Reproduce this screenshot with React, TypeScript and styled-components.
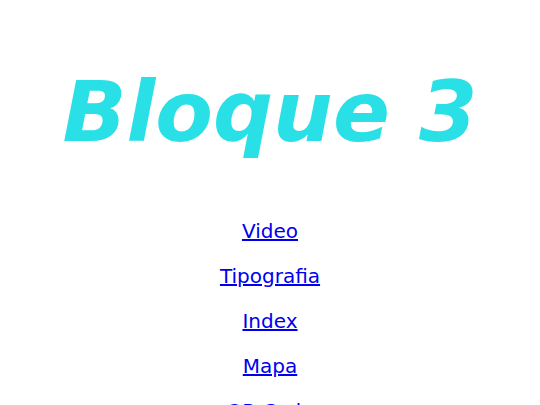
import React from 'react';
import styled, { createGlobalStyle } from 'styled-components';

const GlobalStyle = createGlobalStyle`
  body {
    margin: 0;
    background: #ffffff;
    font-family: "DejaVu Sans", sans-serif;
  }
`;

const Page = styled.div`
  display: flex;
  flex-direction: column;
  align-items: center;
  padding-top: 62px;
`;

const Title = styled.h1`
  font-size: 84px;
  font-weight: 700;
  font-style: italic;
  color: #29e0e6;
  margin: 0 0 56px 0;
  line-height: 1.2;
`;

const LinkList = styled.nav`
  display: flex;
  flex-direction: column;
  align-items: center;
  gap: 21px;
`;

const NavLink = styled.a`
  font-size: 20px;
  line-height: 24px;
  color: #0000ee;
  text-decoration: underline;
`;

const links = ['Video', 'Tipografia', 'Index', 'Mapa', 'QR Code'];

const App: React.FC = () => {
  return (
    <Page>
      <GlobalStyle />
      <Title>Bloque 3</Title>
      <LinkList>
        {links.map((l) => (
          <NavLink key={l} href="#">
            {l}
          </NavLink>
        ))}
      </LinkList>
    </Page>
  );
};

export default App;
